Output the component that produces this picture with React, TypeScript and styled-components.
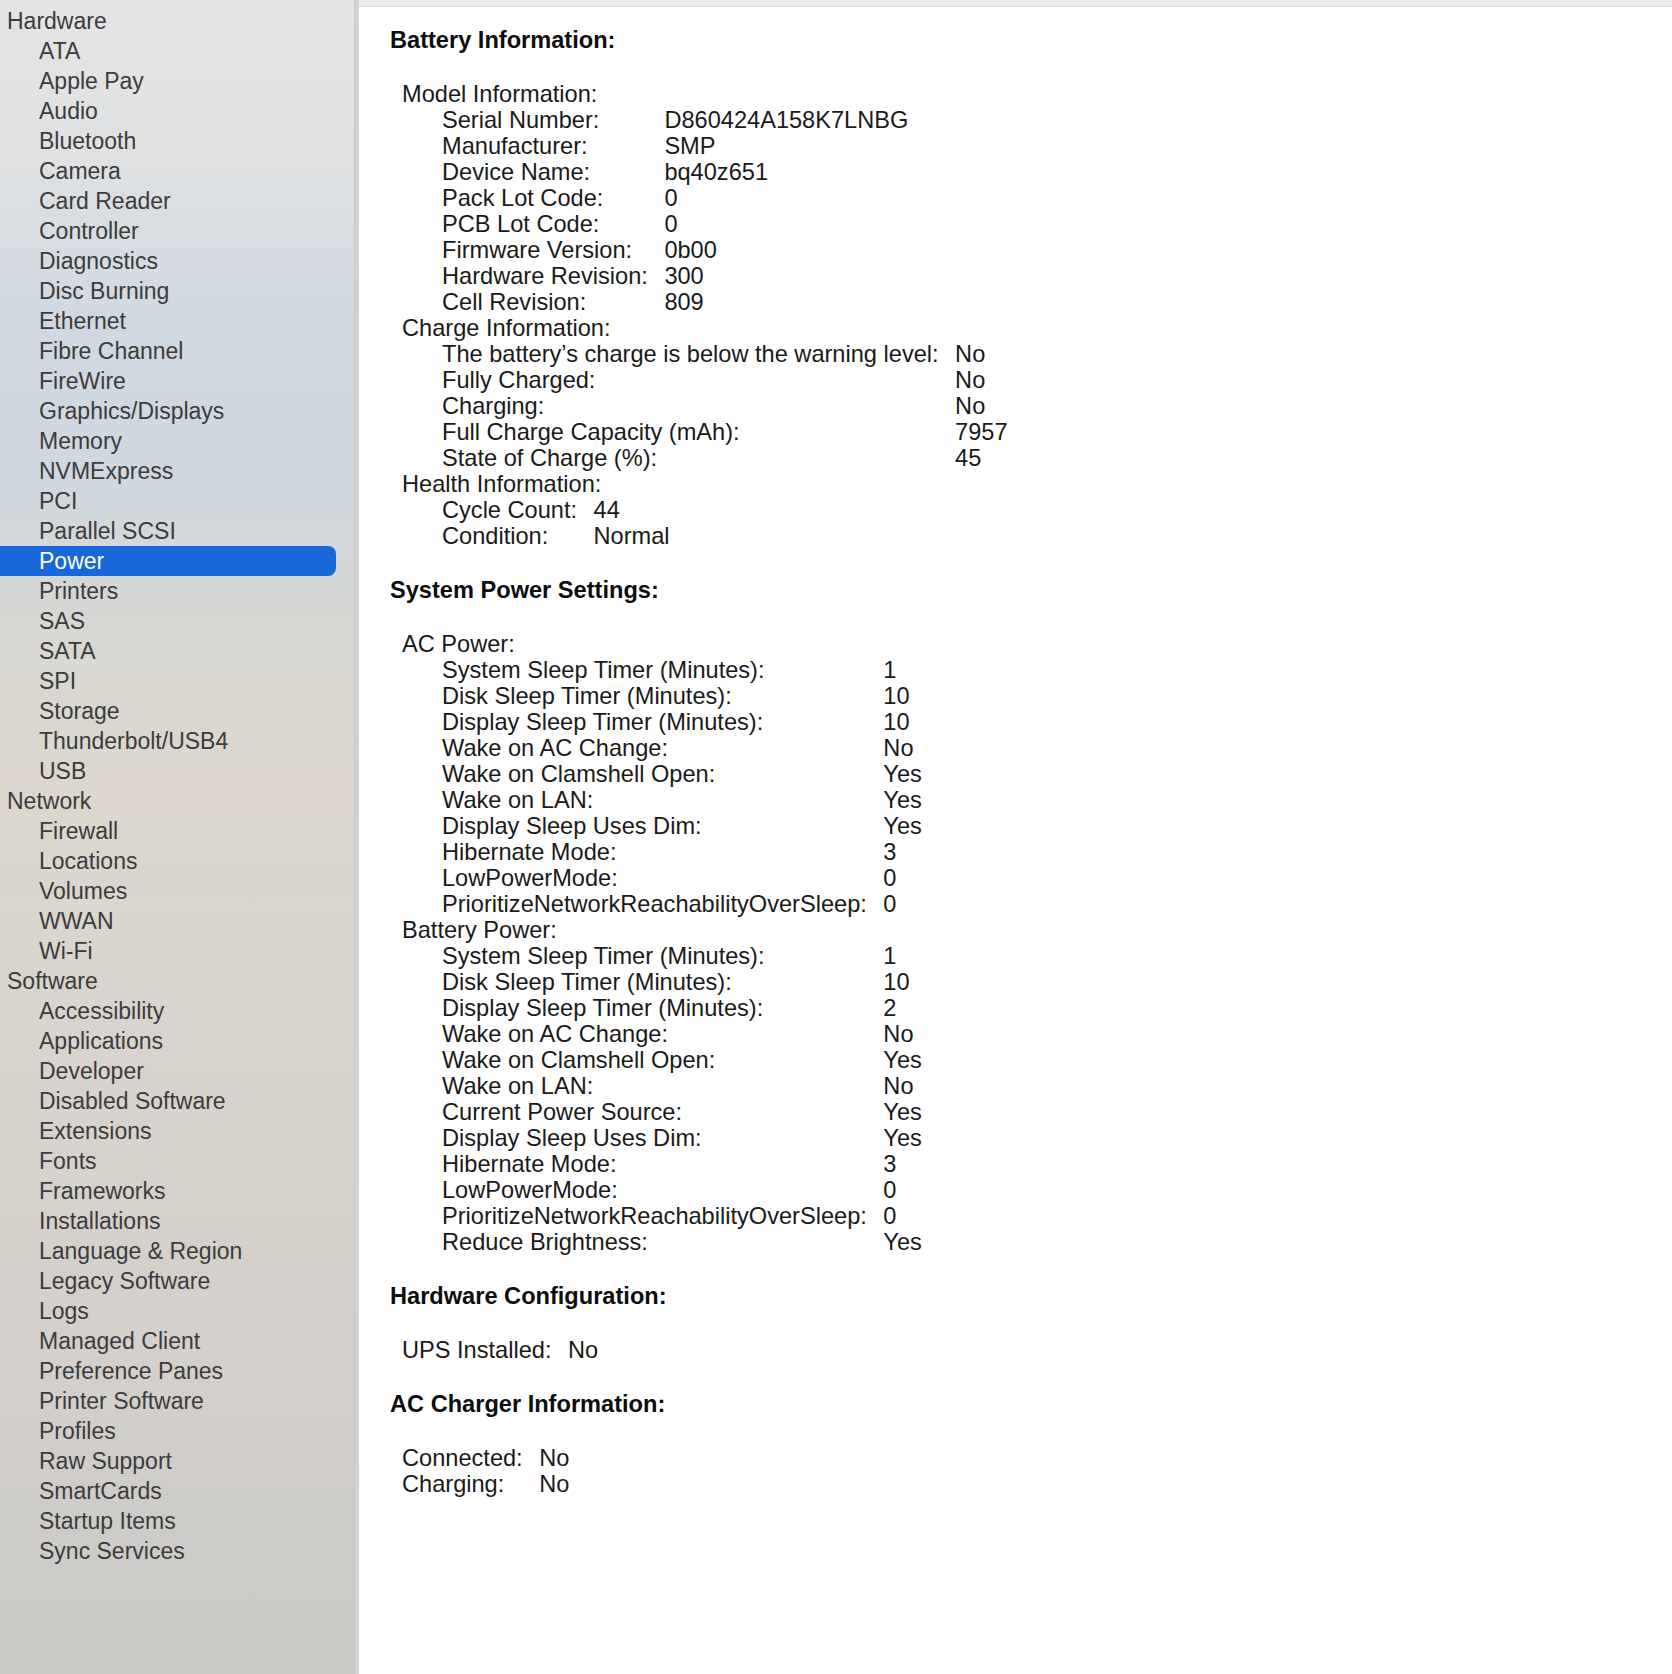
import * as React from 'react';
import styled, { createGlobalStyle } from 'styled-components';

const GlobalStyle = createGlobalStyle`
    html, body {
        margin: 0;
        padding: 0;
        background: #ffffff;
    }
    body {
        font-family: "Liberation Sans", Arial, sans-serif;
    }
`;

const sidebar: { title: string; items: string[] }[] = [
    {
        title: 'Hardware',
        items: [
            'ATA', 'Apple Pay', 'Audio', 'Bluetooth', 'Camera', 'Card Reader', 'Controller',
            'Diagnostics', 'Disc Burning', 'Ethernet', 'Fibre Channel', 'FireWire',
            'Graphics/Displays', 'Memory', 'NVMExpress', 'PCI', 'Parallel SCSI', 'Power',
            'Printers', 'SAS', 'SATA', 'SPI', 'Storage', 'Thunderbolt/USB4', 'USB',
        ],
    },
    {
        title: 'Network',
        items: ['Firewall', 'Locations', 'Volumes', 'WWAN', 'Wi-Fi'],
    },
    {
        title: 'Software',
        items: [
            'Accessibility', 'Applications', 'Developer', 'Disabled Software', 'Extensions',
            'Fonts', 'Frameworks', 'Installations', 'Language & Region', 'Legacy Software',
            'Logs', 'Managed Client', 'Preference Panes', 'Printer Software', 'Profiles',
            'Raw Support', 'SmartCards', 'Startup Items', 'Sync Services',
        ],
    },
];

type Row = [string, string];
type Group = { title: string; rows: Row[] };
type Section = { title: string; groups?: Group[]; rows?: Row[] };

const sections: Section[] = [
    {
        title: 'Battery Information:',
        groups: [
            {
                title: 'Model Information:',
                rows: [
                    ['Serial Number:', 'D860424A158K7LNBG'],
                    ['Manufacturer:', 'SMP'],
                    ['Device Name:', 'bq40z651'],
                    ['Pack Lot Code:', '0'],
                    ['PCB Lot Code:', '0'],
                    ['Firmware Version:', '0b00'],
                    ['Hardware Revision:', '300'],
                    ['Cell Revision:', '809'],
                ],
            },
            {
                title: 'Charge Information:',
                rows: [
                    ['The battery\u2019s charge is below the warning level:', 'No'],
                    ['Fully Charged:', 'No'],
                    ['Charging:', 'No'],
                    ['Full Charge Capacity (mAh):', '7957'],
                    ['State of Charge (%):', '45'],
                ],
            },
            {
                title: 'Health Information:',
                rows: [
                    ['Cycle Count:', '44'],
                    ['Condition:', 'Normal'],
                ],
            },
        ],
    },
    {
        title: 'System Power Settings:',
        groups: [
            {
                title: 'AC Power:',
                rows: [
                    ['System Sleep Timer (Minutes):', '1'],
                    ['Disk Sleep Timer (Minutes):', '10'],
                    ['Display Sleep Timer (Minutes):', '10'],
                    ['Wake on AC Change:', 'No'],
                    ['Wake on Clamshell Open:', 'Yes'],
                    ['Wake on LAN:', 'Yes'],
                    ['Display Sleep Uses Dim:', 'Yes'],
                    ['Hibernate Mode:', '3'],
                    ['LowPowerMode:', '0'],
                    ['PrioritizeNetworkReachabilityOverSleep:', '0'],
                ],
            },
            {
                title: 'Battery Power:',
                rows: [
                    ['System Sleep Timer (Minutes):', '1'],
                    ['Disk Sleep Timer (Minutes):', '10'],
                    ['Display Sleep Timer (Minutes):', '2'],
                    ['Wake on AC Change:', 'No'],
                    ['Wake on Clamshell Open:', 'Yes'],
                    ['Wake on LAN:', 'No'],
                    ['Current Power Source:', 'Yes'],
                    ['Display Sleep Uses Dim:', 'Yes'],
                    ['Hibernate Mode:', '3'],
                    ['LowPowerMode:', '0'],
                    ['PrioritizeNetworkReachabilityOverSleep:', '0'],
                    ['Reduce Brightness:', 'Yes'],
                ],
            },
        ],
    },
    {
        title: 'Hardware Configuration:',
        rows: [['UPS Installed:', 'No']],
    },
    {
        title: 'AC Charger Information:',
        rows: [
            ['Connected:', 'No'],
            ['Charging:', 'No'],
        ],
    },
];

const Window = styled.div`
    display: flex;
    min-height: 1674px;
    width: 1672px;
`;

const Sidebar = styled.nav`
    width: 359px;
    flex-shrink: 0;
    padding-top: 6px;
    box-sizing: border-box;
    border-right: 4px solid #d3d3d3;
    box-shadow: inset -1px 0 0 #c8c8c8;
    background: linear-gradient(
        180deg,
        #e4e4e4 0px,
        #e0e1e2 150px,
        #d0d9e2 320px,
        #cfd8e0 480px,
        #d8d7d2 640px,
        #ddd7cd 780px,
        #d9d5ce 1000px,
        #d6d0cb 1250px,
        #d3cfcb 1400px,
        #cccbc8 1560px,
        #cbcac7 1674px
    );
    font-family: "Liberation Sans", Arial, sans-serif;
    font-size: 23px;
    color: #3c3c3c;
`;

const NavItem = styled.div<{ header?: boolean; selected?: boolean }>`
    height: 30px;
    line-height: 30px;
    margin-right: 19px;
    padding-left: ${p => (p.header ? '7px' : '39px')};
    white-space: nowrap;
    border-radius: 0 8px 8px 0;
    color: ${p => (p.selected ? '#ffffff' : '#3c3c3c')};
    background: ${p => (p.selected ? '#1868d9' : 'transparent')};
`;

const Content = styled.main`
    flex: 1;
    display: flex;
    flex-direction: column;
    background: #ffffff;
    color: #1a1a1a;
    font-family: "Liberation Sans", Arial, sans-serif;
    font-size: 23.6px;
    line-height: 26px;
`;

const TopStrip = styled.div`
    height: 6px;
    background: #ececec;
    border-bottom: 1px solid #dcdcdc;
`;

const Report = styled.div`
    padding: 20px 0 40px 31px;
`;

const SectionBlock = styled.section`
    & + & {
        margin-top: 28px;
    }
`;

const Heading = styled.h2`
    margin: 0 0 28px 0;
    font-size: 23.6px;
    line-height: 26px;
    font-weight: 700;
    color: #0d0d0d;
`;

const GroupTitle = styled.div`
    padding-left: 12px;
`;

const Table = styled.div<{ indent: number }>`
    display: grid;
    grid-template-columns: max-content 1fr;
    column-gap: 16.5px;
    padding-left: ${p => p.indent}px;
`;

const Label = styled.div`
    white-space: nowrap;
`;

const Value = styled.div`
    white-space: nowrap;
`;

const Rows: React.FC<{ rows: Row[]; indent: number }> = ({ rows, indent }) => (
    <Table indent={indent}>
        {rows.map(([label, value], i) => (
            <React.Fragment key={i}>
                <Label>{label}</Label>
                <Value>{value}</Value>
            </React.Fragment>
        ))}
    </Table>
);

export default function App() {
    return (
        <>
            <GlobalStyle />
            <Window>
                <Sidebar>
                    {sidebar.map(group => (
                        <React.Fragment key={group.title}>
                            <NavItem header>{group.title}</NavItem>
                            {group.items.map(item => (
                                <NavItem key={item} selected={item === 'Power'}>
                                    {item}
                                </NavItem>
                            ))}
                        </React.Fragment>
                    ))}
                </Sidebar>
                <Content>
                    <TopStrip />
                    <Report>
                        {sections.map(section => (
                            <SectionBlock key={section.title}>
                                <Heading>{section.title}</Heading>
                                {section.groups?.map(group => (
                                    <div key={group.title}>
                                        <GroupTitle>{group.title}</GroupTitle>
                                        <Rows rows={group.rows} indent={52} />
                                    </div>
                                ))}
                                {section.rows && <Rows rows={section.rows} indent={12} />}
                            </SectionBlock>
                        ))}
                    </Report>
                </Content>
            </Window>
        </>
    );
}
